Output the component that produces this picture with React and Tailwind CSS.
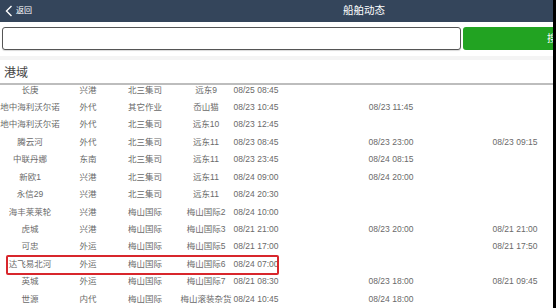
const rows = [
  ["长庚", "兴港", "北三集司", "远东9", "08/25 08:45", "", ""],
  ["地中海利沃尔诺", "外代", "其它作业", "岙山猫", "08/23 10:45", "08/23 11:45", ""],
  ["地中海利沃尔诺", "外代", "北三集司", "远东10", "08/23 12:45", "", ""],
  ["腾云河", "外代", "北三集司", "远东11", "08/23 08:45", "08/23 23:00", "08/23 09:15"],
  ["中联丹娜", "东南", "北三集司", "远东11", "08/23 23:45", "08/24 08:15", ""],
  ["新欧1", "兴港", "北三集司", "远东11", "08/24 09:00", "08/24 20:00", ""],
  ["永信29", "兴港", "北三集司", "远东11", "08/24 20:30", "", ""],
  ["海丰莱莱轮", "兴港", "梅山国际", "梅山国际2", "08/24 10:00", "", ""],
  ["虎城", "兴港", "梅山国际", "梅山国际3", "08/21 21:00", "08/23 20:00", "08/21 21:00"],
  ["可忠", "外运", "梅山国际", "梅山国际5", "08/21 17:00", "", "08/21 17:50"],
  ["达飞易北河", "外运", "梅山国际", "梅山国际6", "08/24 07:00", "", ""],
  ["英城", "外运", "梅山国际", "梅山国际7", "08/21 08:30", "08/23 18:00", "08/21 09:45"],
  ["世源", "内代", "梅山国际", "梅山滚装杂货", "08/24 10:45", "08/24 18:00", ""],
];

const widths = ["w-[60px]", "w-[56px]", "w-[58px]", "w-[64px]", "w-[36px]", "w-[234px]", "w-[14px]"];

const Row = ({ cells, marked }) => (
  <div className="relative flex h-[17.45px] items-center">
    {cells.map((c, i) => (
      <div key={i} className={`${widths[i]} shrink-0 flex justify-center whitespace-nowrap`}>
        {c}
      </div>
    ))}
    {marked && (
      <div className="absolute -top-[1px] -bottom-[2px] left-[6px] w-[273px] border-2 border-[#d8262c] rounded-[2px]" />
    )}
  </div>
);

const App = () => {
  return (
    <div
      className="w-[556px] h-[308px] flex bg-black overflow-hidden"
      style={{ fontFamily: '"Liberation Sans", "Noto Sans CJK SC", sans-serif' }}
    >
      <div className="w-[553px] h-full bg-white flex flex-col overflow-hidden">
        {/* header */}
        <div className="h-[22px] shrink-0 bg-[#34455b] flex items-center pl-[5px] text-white">
          <svg width="8" height="12" viewBox="0 0 8 12" className="shrink-0">
            <polyline points="6.5,1 1.5,6 6.5,11" fill="none" stroke="white" strokeWidth="1.4" />
          </svg>
          <span className="ml-[3px] text-[8px]">返回</span>
          <span className="ml-[311px] text-[10.5px]">船舶动态</span>
        </div>

        {/* search */}
        <div className="flex pt-[5px] pl-[2px] gap-[2px] h-[34px] shrink-0">
          <div className="w-[459px] h-[23px] shrink-0 border border-[#555] rounded-[3px] shadow-[0_1px_1px_rgba(0,0,0,0.15)] bg-white" />
          <div className="w-[200px] h-[23px] shrink-0 bg-[#22a322] rounded-[3px] flex items-center pl-[84px] text-white text-[10px]">
            搜索
          </div>
        </div>
        <div className="h-[4px] shrink-0 bg-[#f4f4f4]" />

        {/* section title */}
        <div className="h-[25px] shrink-0 flex items-center pl-[4px] pt-[2px] text-[12px] text-[#444] border-b-2 border-[#bdbdbd]">
          港域
        </div>

        {/* list */}
        <div className="flex-1 overflow-hidden">
          <div className="-mt-[3.8px] text-[8.5px] text-[#6a6a6a]">
            {rows.map((r, i) => (
              <Row key={i} cells={r} marked={i === 10} />
            ))}
          </div>
        </div>
      </div>
      <div className="w-[3px] h-full bg-black" />
    </div>
  );
};

export default App;
